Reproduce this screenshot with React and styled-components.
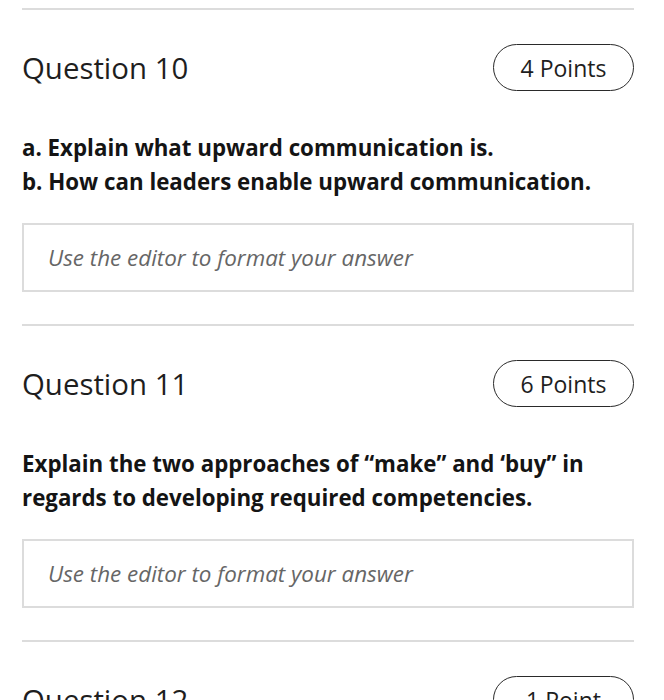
import React from 'react';
import styled, { createGlobalStyle } from 'styled-components';

const GlobalStyle = createGlobalStyle`
  body {
    margin: 0;
    background: #ffffff;
    font-family: "Open Sans", "Noto Sans", sans-serif;
    color: #1b1b1b;
  }
`;

const questions = [
  {
    number: 10,
    points: '4 Points',
    lines: ['a. Explain what upward communication is.', 'b. How can leaders enable upward communication.'],
  },
  {
    number: 11,
    points: '6 Points',
    lines: ['Explain the two approaches of \u201cmake\u201d and \u2018buy\u201d in', 'regards to developing required competencies.'],
  },
  {
    number: 12,
    points: '1 Point',
    lines: [],
  },
];

const App = () => (
  <>
    <GlobalStyle />
    <StPage>
      {questions.map((q) => (
        <StSection key={q.number}>
          <StDivider />
          <StHeader>
            <StTitle>Question {q.number}</StTitle>
            <StPill>{q.points}</StPill>
          </StHeader>
          {q.lines.length > 0 && (
            <>
              <StPrompt>
                {q.lines.map((line) => (
                  <div key={line}>{line}</div>
                ))}
              </StPrompt>
              <StAnswer>Use the editor to format your answer</StAnswer>
            </>
          )}
        </StSection>
      ))}
    </StPage>
  </>
);

export default App;

const StPage = styled.div`
  width: 612px;
  padding: 8px 0 0 22px;
  height: 692px;
  overflow: hidden;
`;

const StSection = styled.section`
  display: flex;
  flex-direction: column;
  padding-bottom: 32px;
`;

const StDivider = styled.div`
  height: 2px;
  background: #dcdcdc;
`;

const StHeader = styled.div`
  display: flex;
  justify-content: space-between;
  align-items: center;
  margin-top: 34px;
`;

const StTitle = styled.h2`
  margin: 0;
  font-size: 29.4px;
  font-weight: 400;
  color: #1e1e1e;
`;

const StPill = styled.div`
  box-sizing: border-box;
  height: 47px;
  width: 141px;
  display: flex;
  align-items: center;
  justify-content: center;
  border: 1.5px solid #2a2a2a;
  border-radius: 24px;
  font-size: 23px;
  color: #1e1e1e;
`;

const StPrompt = styled.div`
  margin-top: 40px;
  font-size: 22.3px;
  font-weight: 700;
  line-height: 34px;
  color: #141414;
`;

const StAnswer = styled.div`
  box-sizing: border-box;
  margin-top: 24px;
  height: 69px;
  display: flex;
  align-items: center;
  padding-left: 24px;
  border: 2px solid #dcdcdc;
  font-size: 22.4px;
  font-style: italic;
  color: #666666;
`;
